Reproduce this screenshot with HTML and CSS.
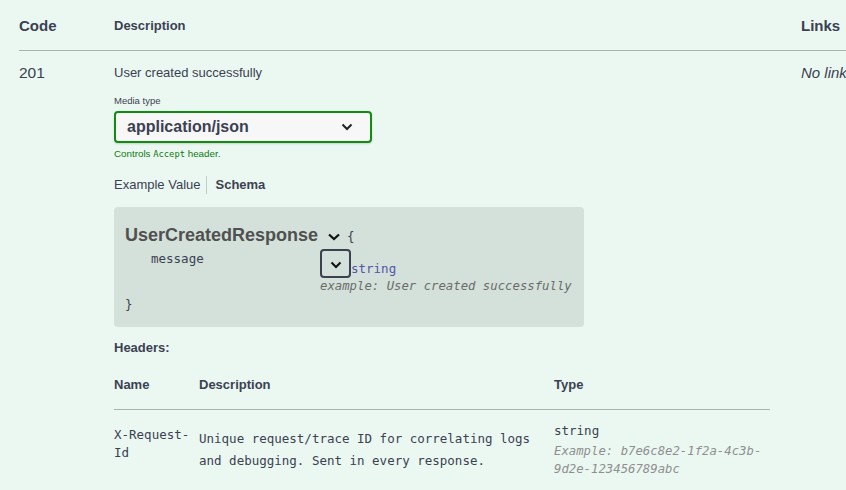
FILE: index.html
```html
<!DOCTYPE html>
<html>
<head>
<meta charset="utf-8">
<link rel="stylesheet" href="styles.css">
</head>
<body>
<div class="responses">
  <div class="row head">
    <div class="col-code">Code</div>
    <div class="col-desc">Description</div>
    <div class="col-links">Links</div>
  </div>
  <div class="row body">
    <div class="col-code code-val">201</div>
    <div class="col-desc">
      <div class="resp-desc">User created successfully</div>
      <div class="media-label">Media type</div>
      <div class="select">
        <span class="select-text">application/json</span>
        <svg class="select-chev" width="12" height="8" viewBox="0 0 12 8"><polyline points="1.5,1.5 6,6 10.5,1.5" fill="none" stroke="#222" stroke-width="2"/></svg>
      </div>
      <div class="controls">Controls <code>Accept</code> header.</div>
      <div class="tabs">
        <span class="tab">Example Value</span>
        <span class="tab active">Schema</span>
      </div>
      <div class="model-box">
        <div class="model-title-line">
          <span class="model-title">UserCreatedResponse</span>
          <svg class="title-chev" width="14" height="10" viewBox="0 0 14 10"><polyline points="2,2.5 7,7 12,2.5" fill="none" stroke="#111" stroke-width="2.2"/></svg>
          <span class="brace">{</span>
        </div>
        <div class="prop">
          <span class="prop-name">message</span>
          <div class="prop-type">
            <div class="type-line">
              <span class="chev-btn"><svg width="12" height="8" viewBox="0 0 12 8"><polyline points="1.5,1.5 6,6 10.5,1.5" fill="none" stroke="#111" stroke-width="2"/></svg></span><span class="type-string">string</span>
            </div>
            <div class="example">example: User created successfully</div>
          </div>
        </div>
        <div class="brace close">}</div>
      </div>
      <div class="headers-title">Headers:</div>
      <div class="hdr-table">
        <div class="hdr-row hdr-head">
          <div>Name</div>
          <div>Description</div>
          <div>Type</div>
        </div>
        <div class="hdr-row hdr-body">
          <div class="hdr-name">X-Request-<br>Id</div>
          <div class="hdr-desc">Unique request/trace ID for correlating logs and debugging. Sent in every response.</div>
          <div class="hdr-type">
            <div>string</div>
            <div class="hdr-example">Example: b7e6c8e2-1f2a-4c3b-9d2e-123456789abc</div>
          </div>
        </div>
      </div>
    </div>
    <div class="col-links links-val">No links</div>
  </div>
</div>
</body>
</html>
```
FILE: styles.css
```css
* { box-sizing: border-box; }
html, body { margin: 0; padding: 0; }
body {
  background: #ebf8f2;
  font-family: "Liberation Sans", Arial, sans-serif;
  color: #3b4151;
  width: 846px;
  height: 490px;
  overflow: hidden;
}
.responses { padding-left: 19px; overflow: hidden; }
.row {
  display: grid;
  grid-template-columns: 95px 687px 200px;
}
.head {
  height: 51px;
  border-bottom: 1px solid #a8b3b0;
  align-items: center;
  font-weight: bold;
}
.head .col-code { font-size: 15px; padding-top: 0; }
.head .col-desc { font-size: 13px; }
.head .col-links { font-size: 15px; }
.body { padding-top: 12px; }
.code-val { font-size: 15.5px; line-height: 20px; }
.col-links { overflow: hidden; white-space: nowrap; }
.links-val { font-style: italic; font-size: 15px; line-height: 20px; }
.resp-desc { font-size: 13px; line-height: 20px; }
.media-label { font-size: 9.5px; margin-top: 12px; line-height: 12px; }
.select {
  margin-top: 4px;
  width: 258px;
  height: 32px;
  border: 2px solid #118c11;
  border-radius: 4px;
  background: #f7f7f7;
  display: flex;
  align-items: center;
  justify-content: space-between;
  padding: 0 17px 0 11px;
  box-shadow: 0 1px 2px rgba(0,0,0,.15);
}
.select-text { font-size: 16px; font-weight: bold; }
.select-chev { display: block; }
.controls { color: #0f7a0f; font-size: 9.8px; margin-top: 5px; line-height: 12px; }
.controls code { font-family: "DejaVu Sans Mono", monospace; font-size: 8.8px; }
.tabs { display: flex; align-items: center; margin-top: 16px; font-size: 13px; line-height: 18px; }
.tab { padding-right: 6px; }
.tab.active {
  font-weight: bold;
  padding-left: 8px;
  border-left: 1px solid #c3ccc8;
}
.model-box {
  margin-top: 13px;
  width: 470px;
  height: 120px;
  background: #d3e1da;
  border-radius: 4px;
  padding: 17px 11px 0 11px;
  font-family: "DejaVu Sans Mono", monospace;
  font-size: 12.5px;
  color: #3b4151;
}
.model-title-line { display: flex; align-items: center; height: 22px; }
.model-title {
  font-family: "Liberation Sans", Arial, sans-serif;
  font-weight: bold;
  font-size: 18px;
  color: #505050;
}
.title-chev { margin-left: 9px; margin-top: 3px; }
.brace { margin-left: 6px; margin-top: 3px; }
.prop { display: flex; margin-top: 0; }
.prop-name { width: 195px; padding-left: 26px; line-height: 18px; padding-top: 4px; }
.prop-type { display: flex; flex-direction: column; }
.type-line { display: flex; align-items: flex-end; height: 29px; margin-top: 3px; }
.chev-btn {
  width: 31px;
  height: 29px;
  border: 2px solid #3b4151;
  border-radius: 4px;
  display: flex;
  align-items: center;
  justify-content: center;
  padding-top: 3px;
}
.type-string { color: #55a; line-height: 20px; margin-bottom: -1px; }
.example { font-style: italic; color: #6b6b6b; font-size: 12.3px; line-height: 18px; margin-top: -1px; }
.brace.close { margin-left: 0; margin-top: 1px; line-height: 18px; }
.headers-title { font-size: 13px; font-weight: bold; margin-top: 13px; line-height: 16px; }
.hdr-table { width: 656px; margin-top: 19px; }
.hdr-row { display: grid; grid-template-columns: 85px 355px 216px; }
.hdr-head {
  font-size: 13px; font-weight: bold;
  height: 35px;
  border-bottom: 1px solid #a8b3b0;
  padding-top: 2px;
}
.hdr-body {
  font-family: "DejaVu Sans Mono", monospace;
  font-size: 12.5px;
  line-height: 22px;
  padding-top: 15px;
}
.hdr-name { padding-top: 1px; line-height: 18px; }
.hdr-desc { padding-top: 3px; line-height: 22px; padding-right: 10px; }
.hdr-type { line-height: 20px; margin-top: -4px; padding-right: 6px; }
.hdr-example { color: #8f8f8f; font-style: italic; font-size: 12.3px; line-height: 18px; margin-top: 1px; }
```
